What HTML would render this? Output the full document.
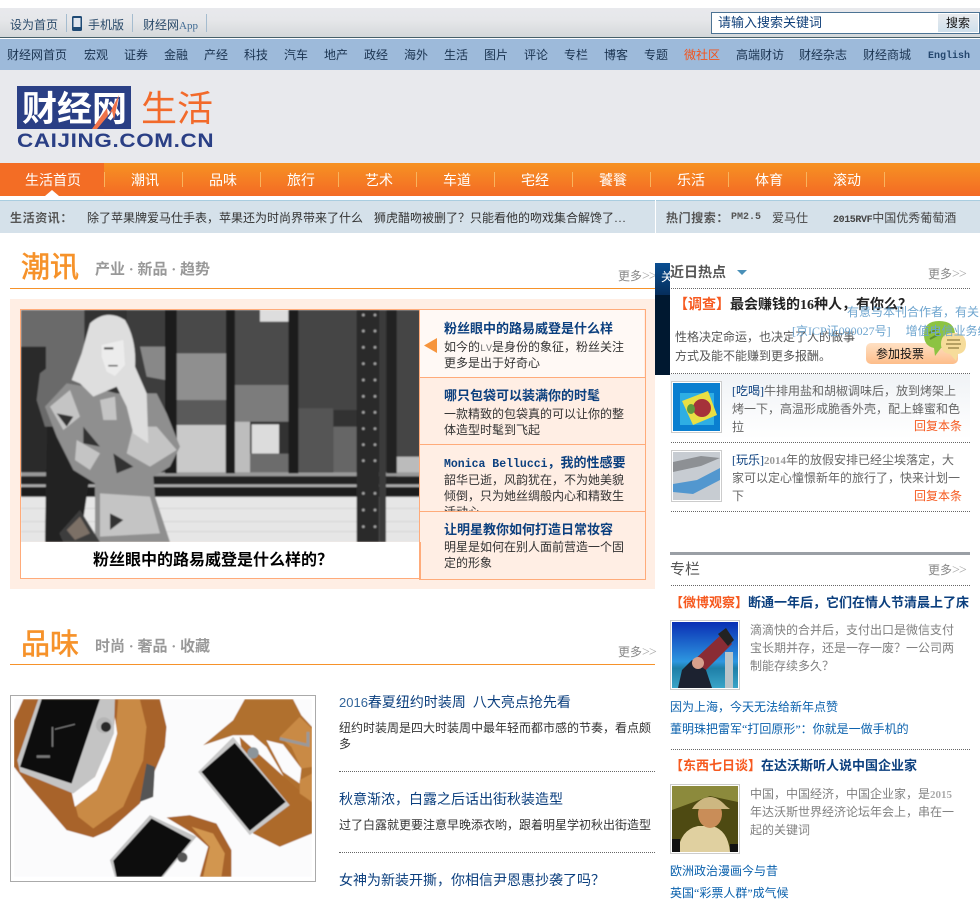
<!DOCTYPE html>
<html lang="zh"><head><meta charset="utf-8"><title>财经网生活</title>
<style>
html,body{margin:0;padding:0;background:#fff}
body{width:980px;height:891px;position:relative;overflow:hidden;font:12px/18px "Liberation Serif","WenQuanYi Zen Hei","Noto Sans CJK SC",sans-serif;color:#333}
div,svg{position:absolute}
.t{white-space:nowrap}
.m{font-family:"Liberation Mono","WenQuanYi Zen Hei",monospace;line-height:1}
.dot{height:0;border-top:1px dotted #666}
.nav{top:46px;color:#1a3350;line-height:18px;white-space:nowrap}
.tab{top:173px;color:#fff;font-size:14px;line-height:18px;white-space:nowrap}
.sep{top:172px;width:1px;height:15px;background:#f9b45e}
.more{color:#888;white-space:nowrap}
.more i{font-style:normal;color:#aaa;font-size:14px;line-height:1;letter-spacing:-1px}
.h{font-size:13px;font-weight:bold;color:#0b3f7e;white-space:nowrap;left:444px}
.d{left:444px;width:184px;color:#333;line-height:16px;overflow:hidden}
.gr{color:#666}
.or{color:#f6591f}
.bl{color:#0b3f7e}
.ln{color:#0a61ad;white-space:nowrap;font-size:12px}
.big{font-size:29px;line-height:32px;color:#f6922a;-webkit-text-stroke:.6px #f6922a;font-family:'WenQuanYi Zen Hei','Noto Sans CJK SC',sans-serif;white-space:nowrap}
</style></head><body>

<div style="left:0;top:8px;width:980px;height:29px;background:linear-gradient(#e8e9ed 0,#e6e7ea 40%,#d4d8da 100%)"></div>
<div style="left:0;top:37px;width:980px;height:1px;background:#46606a"></div>
<div style="left:0;top:39px;width:980px;height:31px;background:#9dbada"></div>
<div style="left:0;top:70px;width:980px;height:93px;background:#e8e9ed"></div>

<div class="t" style="left:10px;top:16px;color:#2a4a6a">设为首页</div>
<div style="left:66px;top:14px;width:1px;height:18px;background:#a5bccf"></div>
<svg style="left:72px;top:16px" width="11" height="15"><rect width="10" height="15" rx="1.5" fill="#1f4a75"/><rect x="1.5" y="2" width="7" height="9" fill="#dfe5ee"/></svg>
<div class="t" style="left:88px;top:16px;color:#2a4a6a">手机版</div>
<div style="left:132px;top:14px;width:1px;height:18px;background:#a5bccf"></div>
<div class="t" style="left:143px;top:16px;color:#2a4a6a">财经网<span style="color:#3f6a94;font-size:11px">App</span></div>
<div style="left:206px;top:14px;width:1px;height:18px;background:#a5bccf"></div>

<div style="left:711px;top:12px;width:267px;height:20px;background:#fff;border:1px solid #4c7394"></div>
<div class="t" style="left:718px;top:14px;font-size:13px;color:#10407a">请输入搜索关键词</div>
<div class="t" style="left:938px;top:14px;width:40px;height:18px;background:linear-gradient(#e9ebee,#cfe0ec);text-align:center;color:#111;font-size:12px;line-height:18px">搜索</div>

<div class="nav" style="left:7px">财经网首页</div>
<div class="nav" style="left:84px">宏观</div>
<div class="nav" style="left:124px">证券</div>
<div class="nav" style="left:164px">金融</div>
<div class="nav" style="left:204px">产经</div>
<div class="nav" style="left:244px">科技</div>
<div class="nav" style="left:284px">汽车</div>
<div class="nav" style="left:324px">地产</div>
<div class="nav" style="left:364px">政经</div>
<div class="nav" style="left:404px">海外</div>
<div class="nav" style="left:444px">生活</div>
<div class="nav" style="left:484px">图片</div>
<div class="nav" style="left:524px">评论</div>
<div class="nav" style="left:564px">专栏</div>
<div class="nav" style="left:604px">博客</div>
<div class="nav" style="left:644px">专题</div>
<div class="nav" style="left:684px;color:#f3541c">微社区</div>
<div class="nav" style="left:736px">高端财访</div>
<div class="nav" style="left:799px">财经杂志</div>
<div class="nav" style="left:863px">财经商城</div>
<div class="nav m" style="left:928px;top:48px;font-size:10px;line-height:18px;font-weight:bold;color:#24476e">English</div>

<div style="left:17px;top:86px;width:114px;height:43px;background:#2a3f85"></div>
<div class="t" style="left:22px;top:89px;font-size:35px;line-height:36px;font-weight:bold;color:#fff;font-family:'WenQuanYi Zen Hei','Noto Sans CJK SC',sans-serif">财经网</div>
<svg style="left:90px;top:92px" width="32" height="38"><path d="M2 37 L17 16 L18 24 L29 3 L24 28 L22 19 L7 37Z" fill="#f0734a"/></svg>
<div class="t" style="left:17px;top:132px;font:bold 19px/20px 'Liberation Sans',sans-serif;color:#2a3f85;letter-spacing:.55px;transform-origin:0 0;transform:scaleX(1.18)">CAIJING.COM.CN</div>
<div class="t" style="left:141px;top:85px;font-size:36px;line-height:42px;color:#f26a2b;font-family:'Noto Sans CJK SC',sans-serif">生活</div>

<div style="left:0;top:163px;width:980px;height:33px;background:linear-gradient(#f69223,#f46a24)"></div>
<div style="left:0;top:163px;width:104px;height:33px;background:#f36d25"></div>
<svg style="left:45px;top:190px" width="14" height="6"><path d="M0 6L7 0L14 6Z" fill="#fff"/></svg>
<div class="tab" style="left:25px">生活首页</div>
<div class="sep" style="left:104px"></div><div class="tab" style="left:131px">潮讯</div>
<div class="sep" style="left:182px"></div><div class="tab" style="left:209px">品味</div>
<div class="sep" style="left:260px"></div><div class="tab" style="left:287px">旅行</div>
<div class="sep" style="left:338px"></div><div class="tab" style="left:365px">艺术</div>
<div class="sep" style="left:416px"></div><div class="tab" style="left:443px">车道</div>
<div class="sep" style="left:494px"></div><div class="tab" style="left:521px">宅经</div>
<div class="sep" style="left:572px"></div><div class="tab" style="left:599px">饕餮</div>
<div class="sep" style="left:650px"></div><div class="tab" style="left:677px">乐活</div>
<div class="sep" style="left:728px"></div><div class="tab" style="left:755px">体育</div>
<div class="sep" style="left:806px"></div><div class="tab" style="left:833px">滚动</div>
<div class="sep" style="left:884px"></div>

<div style="left:0;top:200px;width:980px;height:33px;background:#d5e1ea;border-top:1px solid #a9cde0;box-sizing:border-box"></div>
<div style="left:655px;top:200px;width:1px;height:33px;background:#fff"></div>
<div class="t" style="left:10px;top:209px;font-weight:bold;color:#555;letter-spacing:.6px">生活资讯：</div>
<div class="t" style="left:87px;top:209px;color:#333">除了苹果牌爱马仕手表，苹果还为时尚界带来了什么</div>
<div class="t" style="left:374px;top:209px;color:#333">狮虎醋吻被删了？只能看他的吻戏集合解馋了…</div>
<div class="t" style="left:666px;top:209px;font-weight:bold;color:#555;letter-spacing:.6px">热门搜索：</div>
<div class="t" style="left:731px;top:209px;color:#555;font-family:'Liberation Mono',monospace;font-size:10px;font-weight:bold">PM2.5</div>
<div class="t" style="left:772px;top:209px;color:#444">爱马仕</div>
<div class="t" style="left:833px;top:209px;color:#444"><span class="m" style="font-size:10px;font-weight:bold;letter-spacing:-.4px">2015RVF</span>中国优秀葡萄酒</div>

<!-- 潮讯 -->
<div class="big" style="left:21px;top:249px">潮讯</div>
<div class="t" style="left:95px;top:260px;font-size:15px;line-height:20px;font-weight:bold;color:#999">产业 · 新品 · 趋势</div>
<div style="left:10px;top:288px;width:645px;height:1px;background:#f6922a"></div>
<div class="more" style="left:618px;top:267px">更多<i>&gt;&gt;</i></div>

<div style="left:10px;top:299px;width:645px;height:290px;background:#ffeee4"></div>
<svg style="left:21px;top:310px" width="399" height="232" viewBox="63 210 1197 696">
<defs><filter id="s" x="0" y="0" width="100%" height="100%"><feGaussianBlur stdDeviation="2.5"/></filter></defs>
<g filter="url(#s)">
<rect x="63" y="210" width="1197" height="696" fill="#333"/>
<rect x="63" y="210" width="190" height="270" fill="#6a6a6a"/>
<rect x="63" y="320" width="75" height="380" fill="#2b2b2b"/>
<path d="M110 480 L120 400 L250 300 L252 560 L135 560Z" fill="#6a6a6a"/>
<rect x="380" y="210" width="115" height="490" fill="#3d3d3d"/>
<path d="M420 320 L495 320 L495 420 L440 410Z" fill="#888"/>
<rect x="530" y="210" width="150" height="135" fill="#4a4a4a"/>
<rect x="530" y="340" width="150" height="140" fill="#8f8f8f"/>
<rect x="530" y="480" width="150" height="75" fill="#5a5a5a"/>
<rect x="530" y="555" width="147" height="145" fill="#c9c9c9"/>
<rect x="705" y="210" width="160" height="225" fill="#4c4c4c"/>
<rect x="780" y="210" width="85" height="35" fill="#ddd"/>
<rect x="705" y="435" width="160" height="110" fill="#7c7c7c"/>
<rect x="705" y="545" width="45" height="155" fill="#bdbdbd"/>
<rect x="755" y="553" width="82" height="88" fill="#dcdcdc"/>
<rect x="750" y="641" width="115" height="60" fill="#6c6c6c"/>
<rect x="895" y="210" width="175" height="300" fill="#454545"/>
<rect x="895" y="505" width="105" height="190" fill="#555"/>
<rect x="1000" y="560" width="70" height="140" fill="#666"/>
<rect x="1190" y="210" width="70" height="440" fill="#444"/>
<rect x="1190" y="650" width="70" height="62" fill="#bbb"/>
<rect x="63" y="770" width="1197" height="136" fill="#e6e6e6"/>
<path d="M63 845H1260M63 805H1260M63 875H1260" stroke="#c8c8c8" stroke-width="2"/>
<rect x="63" y="697" width="1197" height="12" fill="#999"/>
<rect x="63" y="709" width="1197" height="24" fill="#222"/>
<rect x="63" y="733" width="1197" height="8" fill="#aaa"/>
<rect x="63" y="741" width="1197" height="29" fill="#1f1f1f"/>
<rect x="495" y="210" width="35" height="490" fill="#1c1c1c"/>
<rect x="678" y="210" width="27" height="490" fill="#1c1c1c"/>
<rect x="866" y="210" width="29" height="490" fill="#1c1c1c"/>
<rect x="1160" y="210" width="30" height="490" fill="#222"/>
<rect x="1070" y="210" width="68" height="696" fill="#2b2b2b"/>
<rect x="1138" y="210" width="20" height="696" fill="#3a3a3a"/>
<g fill="#aaa"><circle cx="1090" cy="225" r="4"/><circle cx="1125" cy="225" r="4"/><circle cx="1090" cy="273" r="4"/><circle cx="1125" cy="273" r="4"/><circle cx="1090" cy="322" r="4"/><circle cx="1125" cy="322" r="4"/><circle cx="1090" cy="371" r="4"/><circle cx="1125" cy="371" r="4"/><circle cx="1090" cy="420" r="4"/><circle cx="1125" cy="420" r="4"/><circle cx="1090" cy="469" r="4"/><circle cx="1125" cy="469" r="4"/><circle cx="1090" cy="517" r="4"/><circle cx="1125" cy="517" r="4"/><circle cx="1090" cy="566" r="4"/><circle cx="1125" cy="566" r="4"/><circle cx="1090" cy="614" r="4"/><circle cx="1125" cy="614" r="4"/><circle cx="1090" cy="662" r="4"/><circle cx="1125" cy="662" r="4"/><circle cx="1090" cy="760" r="4"/><circle cx="1125" cy="760" r="4"/><circle cx="1090" cy="810" r="4"/><circle cx="1125" cy="810" r="4"/><circle cx="1090" cy="860" r="4"/><circle cx="1125" cy="860" r="4"/></g>
<path d="M140 560 L135 906 L240 906 L270 700 L230 560Z" fill="#242424"/>
<path d="M135 500 L200 430 L290 445 L350 460 L470 460 L500 520 L540 620 L510 680 L460 710 L465 770 L510 906 L285 906 L285 730 L220 690 L170 590Z" fill="#8f8f8f"/>
<path d="M150 500 L210 450 L240 530 L190 570Z M230 600 L300 640 L270 690 L225 660Z M400 560 L470 560 L530 630 L450 680 L380 640Z M300 760 L450 770 L480 880 L300 890Z M300 480 L345 470 L350 540 L310 540Z" fill="#c4c4c4"/>
<path d="M170 520 L220 530 L200 560Z M250 560 L300 620 L250 610Z M340 640 L400 680 L350 700Z M330 820 L370 840 L330 870Z" fill="#333"/>
<path d="M270 250 Q320 205 375 240 Q410 300 405 380 L440 460 L445 610 L400 580 L380 500 L350 440 L280 470 L240 430 L215 420 L245 340Z" fill="#dedede"/>
<path d="M305 315 L370 300 L375 375 L345 408 L320 395 L305 350Z" fill="#ececec"/>
<path d="M312 322h28v6h-28zM325 375h28v4h-28z" fill="#333"/>
<path d="M178 880 L240 810 L300 906 L190 906Z" fill="#3d3d3d"/>
<path d="M200 870 L240 830 L270 880 L225 900Z" fill="#7c6f66"/>
</g>
</svg>
<div style="left:20px;top:309px;width:399px;height:1px;background:#ffab7a"></div>
<div style="left:20px;top:310px;width:1px;height:232px;background:#ffab7a"></div>
<div style="left:20px;top:542px;width:399px;height:36px;background:#fff;border:1px solid #ffab7a;border-top:0"></div>
<div class="t" style="left:93px;top:551px;font-size:16px;line-height:20px;font-weight:bold;color:#000">粉丝眼中的路易威登是什么样的？</div>

<div style="left:419px;top:309px;width:225px;height:269px;border:1px solid #ffab7a"></div>
<div style="left:420px;top:310px;width:224px;height:67px;background:#fff9f5"></div>
<div style="left:420px;top:377px;width:225px;height:1px;background:#ffab7a"></div>
<div style="left:420px;top:444px;width:225px;height:1px;background:#ffab7a"></div>
<div style="left:420px;top:511px;width:225px;height:1px;background:#ffab7a"></div>
<svg style="left:424px;top:338px" width="13" height="15"><path d="M13 0V15L0 7.5Z" fill="#f6953d"/></svg>
<div class="h" style="top:320px">粉丝眼中的路易威登是什么样</div>
<div class="d" style="top:339px;height:34px">如今的<span class="m" style="color:#777;font-size:10px">LV</span>是身份的象征，粉丝关注<br>更多是出于好奇心</div>
<div class="h" style="top:387px">哪只包袋可以装满你的时髦</div>
<div class="d" style="top:406px;height:34px">一款精致的包袋真的可以让你的整<br>体造型时髦到飞起</div>
<div class="h" style="top:454px"><span class="m" style="font-size:11.5px">Monica Bellucci</span>，我的性感要</div>
<div class="d" style="top:472px;height:39px">韶华已逝，风韵犹在，不为她美貌<br>倾倒，只为她丝绸般内心和精致生<br>活动心</div>
<div class="h" style="top:521px">让明星教你如何打造日常妆容</div>
<div class="d" style="top:539px;height:34px">明星是如何在别人面前营造一个固<br>定的形象</div>

<!-- 品味 -->
<div class="big" style="left:21px;top:626px">品味</div>
<div class="t" style="left:95px;top:637px;font-size:15px;line-height:20px;font-weight:bold;color:#999">时尚 · 奢品 · 收藏</div>
<div style="left:10px;top:664px;width:645px;height:1px;background:#f6922a"></div>
<div class="more" style="left:618px;top:643px">更多<i>&gt;&gt;</i></div>

<div style="left:10px;top:695px;width:304px;height:185px;border:1px solid #aaa"></div>
<svg style="left:14px;top:699px" width="298" height="178" viewBox="42 237 895 533">
<defs><filter id="w" x="0" y="0" width="100%" height="100%"><feGaussianBlur stdDeviation="1.5"/></filter></defs>
<g filter="url(#w)">
<rect x="42" y="237" width="895" height="533" fill="#fbfbfc"/>
<!-- left watch -->
<path d="M70 237 L480 237 L500 320 L495 380 L470 440 L420 550 L330 630 L280 652 L200 630 L80 490 L42 440 L42 300Z" fill="#a8632a"/>
<path d="M355 237 L420 237 L440 320 L430 420 L370 560 L280 625 L235 590 L222 540 L300 480 L345 360Z" fill="#c98a45"/>
<path d="M345 290 L352 340 L330 420 L290 510 L225 560 L215 515 L285 470 L340 340Z" fill="#fbfbfc"/>
<path d="M115 237 L345 237 L342 340 L285 470 L220 520 L60 455 L52 420Z" fill="#c4c4c4"/>
<path d="M125 237 L300 237 L215 490 L60 440Z" fill="#0c0c0c"/>
<circle cx="312" cy="315" r="24" fill="#b5b5b5"/><circle cx="318" cy="320" r="15" fill="#2a2a2a"/>
<path d="M155 320h5v60h-5zM165 325l60 -15v4l-60 15zM110 405h40v8h-40z" fill="#777"/>
<path d="M440 430 L465 440 L460 530 L420 545Z" fill="#555"/>
<!-- right watch -->
<path d="M610 375 L700 300 L735 237 L880 237 L905 285 L937 320 L937 540 L870 500 L800 380 L760 345 L700 345Z" fill="#b0702f"/>
<path d="M800 360 L850 372 L905 445 L900 490 L850 455Z" fill="#fbfbfc"/>
<path d="M840 350 L900 290 L937 325 L937 440 L905 445 L875 380Z" fill="#c98a45"/>
<path d="M720 350 L937 545 L937 640 L840 680 L760 640 Z" fill="#ad6a2b"/>
<path d="M595 455 L700 350 L870 555 L750 645Z" fill="#c9c9c9"/>
<path d="M605 455 L705 368 L858 545 L750 632Z" fill="#0e0e0e"/>
<circle cx="760" cy="398" r="17" fill="#8b949a"/>
<path d="M900 480 L937 460 L937 545 L900 520Z" fill="#c98a45"/>
<path d="M840 355 L925 375 L925 335" stroke="#999" stroke-width="9" fill="none"/>
<!-- bottom watch -->
<path d="M500 592 L570 585 L650 610 L695 690 L695 770 L600 770 L625 680 L580 640Z" fill="#a8632a"/>
<path d="M575 620 L640 640 L675 700 L665 770 L610 770 L630 680Z" fill="#d29650"/>
<path d="M570 655 L605 690 L590 770 L520 770Z" fill="#fbfbfc"/>
<path d="M330 720 L450 585 L590 650 L490 770 L345 770Z" fill="#c4c4c4"/>
<path d="M340 722 L455 595 L575 660 L485 770 L350 770Z" fill="#0a0a0a"/>
<circle cx="548" cy="712" r="15" fill="#555"/>
</g>
</svg>

<div class="t bl" style="left:339px;top:695px;font-size:14px"><span style="font-family:'Liberation Sans',sans-serif;color:#33659a;font-size:13px;line-height:1">2016</span>春夏纽约时装周&nbsp; 八大亮点抢先看</div>
<div style="left:339px;top:720px;width:318px;line-height:16px;color:#333">纽约时装周是四大时装周中最年轻而都市感的节奏，看点颇<br>多</div>
<div class="dot" style="left:339px;top:771px;width:316px"></div>
<div class="t bl" style="left:339px;top:792px;font-size:14px">秋意渐浓，白露之后话出街秋装造型</div>
<div class="t" style="left:339px;top:816px;color:#333">过了白露就更要注意早晚添衣哟，跟着明星学初秋出街造型</div>
<div class="dot" style="left:339px;top:852px;width:316px"></div>
<div class="t bl" style="left:339px;top:873px;font-size:14px">女神为新装开撕，你相信尹恩惠抄袭了吗？</div>

<!-- right -->
<div class="t" style="left:670px;top:265px;font-size:14px;font-weight:bold;color:#555">近日热点</div>
<svg style="left:737px;top:270px" width="10" height="5"><path d="M0 0H10L5 5Z" fill="#4a90b8"/></svg>
<div class="more" style="left:928px;top:265px">更多<i>&gt;&gt;</i></div>
<div class="dot" style="left:671px;top:288px;width:299px"></div>
<div class="t" style="left:674px;top:297px;font-size:14px;font-weight:bold;color:#222"><span class="or">【调查】</span>最会赚钱的16种人，有你么？</div>
<div class="t gr" style="left:675px;top:328px;line-height:19px;color:#555">性格决定命运，也决定了人的做事<br>方式及能不能赚到更多报酬。</div>
<div style="left:866px;top:343px;width:92px;height:21px;border-radius:5px;background:linear-gradient(#ffe1c4,#fdbd8a)"></div>
<div class="t" style="left:876px;top:345px;color:#111">参加投票</div>
<svg style="left:922px;top:319px" width="46" height="46"><path d="M2 16 Q2 2 17 2 Q33 2 33 16 Q33 28 19 29 L13 37 L12 29 Q2 27 2 16Z" fill="#8cc342"/><path d="M19 25 Q19 14 31 14 Q44 14 44 25 Q44 34 36 35 L34 42 L28 35 Q19 34 19 25Z" fill="#f6dc9a"/><g stroke="#a08c50" stroke-width="1.5"><path d="M25 21H38M24 25H39M26 29H37"/></g><g stroke="#5f8f2b" stroke-width="2"><path d="M7 14L16 10M8 20L17 15"/></g></svg>
<div class="t" style="left:847px;top:303px;color:#6ea5cf">有意与本刊合作者，有关</div>
<div class="t" style="left:792px;top:322px;color:#6ea5cf">[京ICP证090027号]&nbsp;&nbsp;&nbsp;&nbsp; 增值电信业务经</div>

<div class="dot" style="left:671px;top:373px;width:299px"></div>
<div style="left:670px;top:374px;width:300px;height:65px;background:linear-gradient(#f0f3f6,#fff)"></div>
<svg style="left:671px;top:381px" width="51" height="52"><rect x=".5" y=".5" width="50" height="51" fill="#fff" stroke="#ccc"/><rect x="2" y="2" width="47" height="48" fill="#0a7fd0"/><rect x="9" y="12" width="34" height="32" fill="#2eaee4"/><path d="M11 20 L37 10 L46 34 L22 44Z" fill="#e8df44"/><ellipse cx="31" cy="27" rx="9" ry="9" fill="#a5323a"/><ellipse cx="20" cy="28" rx="4" ry="5" fill="#5d9a3f"/></svg>
<div style="left:732px;top:382px;width:232px;line-height:18px;color:#666"><span class="bl">[吃喝]</span>牛排用盐和胡椒调味后，放到烤架上<br>烤一下，高温形成脆香外壳，配上蜂蜜和色<br>拉</div>
<div class="t or" style="left:914px;top:417px">回复本条</div>
<div class="dot" style="left:671px;top:442px;width:299px"></div>
<svg style="left:671px;top:450px" width="51" height="52"><rect x=".5" y=".5" width="50" height="51" fill="#fff" stroke="#ccc"/><rect x="2" y="2" width="47" height="48" fill="#c7ccd2"/><path d="M2 34 L26 30 L49 18 V30 L22 44 L2 42Z" fill="#5297cf"/><path d="M2 12 L30 6 L49 8 L30 16 L2 22Z" fill="#8d9094"/></svg>
<div style="left:732px;top:451px;width:232px;line-height:18px;color:#666"><span class="bl">[玩乐]</span><b style="color:#999;font-size:11px;line-height:1">2014</b>年的放假安排已经尘埃落定，大<br>家可以定心憧憬新年的旅行了，快来计划一<br>下</div>
<div class="t or" style="left:914px;top:487px">回复本条</div>
<div class="dot" style="left:671px;top:511px;width:299px"></div>

<div style="left:670px;top:552px;width:300px;height:3px;background:#9a9fa5"></div>
<div class="t" style="left:670px;top:561px;font-size:15px;color:#555">专栏</div>
<div class="more" style="left:928px;top:561px">更多<i>&gt;&gt;</i></div>
<div class="dot" style="left:671px;top:585px;width:299px"></div>
<div class="t" style="left:670px;top:594px;font-size:13px;font-weight:bold;color:#0b3f7e"><span class="or">【微博观察】</span>断通一年后，它们在情人节清晨上了床</div>
<svg style="left:670px;top:620px" width="70" height="70"><rect x=".5" y=".5" width="69" height="69" fill="#fff" stroke="#ccc"/><defs><linearGradient id="g" x1="0" y1="0" x2="0" y2="1"><stop offset="0" stop-color="#0a2fb4"/><stop offset=".6" stop-color="#2d97e0"/><stop offset=".7" stop-color="#1e7fa8"/><stop offset="1" stop-color="#3aa5c8"/></linearGradient></defs><rect x="2" y="2" width="66" height="66" fill="url(#g)"/><path d="M22 42 L54 12 L62 24 L34 52Z" fill="#8a2c34"/><path d="M48 14 L56 8 L64 20 L58 26Z" fill="#222"/><path d="M12 50 L22 40 L36 50 L42 68 H8Z" fill="#1c2230"/><circle cx="28" cy="43" r="6" fill="#d7a08c"/><rect x="55" y="32" width="8" height="36" fill="#b9c4c9"/></svg>
<div style="left:750px;top:621px;width:210px;line-height:18px;color:#808080">滴滴快的合并后，支付出口是微信支付<br>宝长期并存，还是一存一废？一公司两<br>制能存续多久？</div>
<div class="ln t" style="left:670px;top:698px">因为上海，今天无法给新年点赞</div>
<div class="ln t" style="left:670px;top:720px">董明珠把雷军“打回原形”：你就是一做手机的</div>
<div class="dot" style="left:671px;top:749px;width:299px"></div>
<div class="t" style="left:670px;top:757px;font-size:13px;font-weight:bold;color:#0b3f7e"><span class="or">【东西七日谈】</span>在达沃斯听人说中国企业家</div>
<svg style="left:670px;top:784px" width="70" height="70"><rect x=".5" y=".5" width="69" height="69" fill="#fff" stroke="#ccc"/><rect x="2" y="2" width="66" height="66" fill="#4e4a12"/><path d="M2 2H68V18L40 12L2 26Z" fill="#8c8a3c"/><path d="M8 68 Q10 46 28 42 L42 42 Q58 46 60 68Z" fill="#e0d0a0"/><ellipse cx="40" cy="30" rx="12" ry="14" fill="#c98d58"/><path d="M24 22 Q40 4 56 22 L60 25 H22Z" fill="#cdb781"/><path d="M2 55 H10 V68 H2Z M60 60 H68 V68 H60Z" fill="#111"/></svg>
<div style="left:750px;top:785px;width:212px;line-height:18px;color:#808080">中国，中国经济，中国企业家，是<b style="color:#aaa;font-size:11px;line-height:1">2015</b><br>年达沃斯世界经济论坛年会上，串在一<br>起的关键词</div>
<div class="ln t" style="left:670px;top:862px">欧洲政治漫画今与昔</div>
<div class="ln t" style="left:670px;top:884px">英国“彩票人群”成气候</div>

<!-- overlay -->
<div style="left:655px;top:263px;width:15px;height:112px;background:#001830"></div>
<div style="left:655px;top:263px;width:15px;height:32px;background:linear-gradient(#0a4f92,#062e5c)"></div>
<div class="t" style="left:661px;top:268px;width:9px;overflow:hidden;color:#fff">关</div>
</body></html>
